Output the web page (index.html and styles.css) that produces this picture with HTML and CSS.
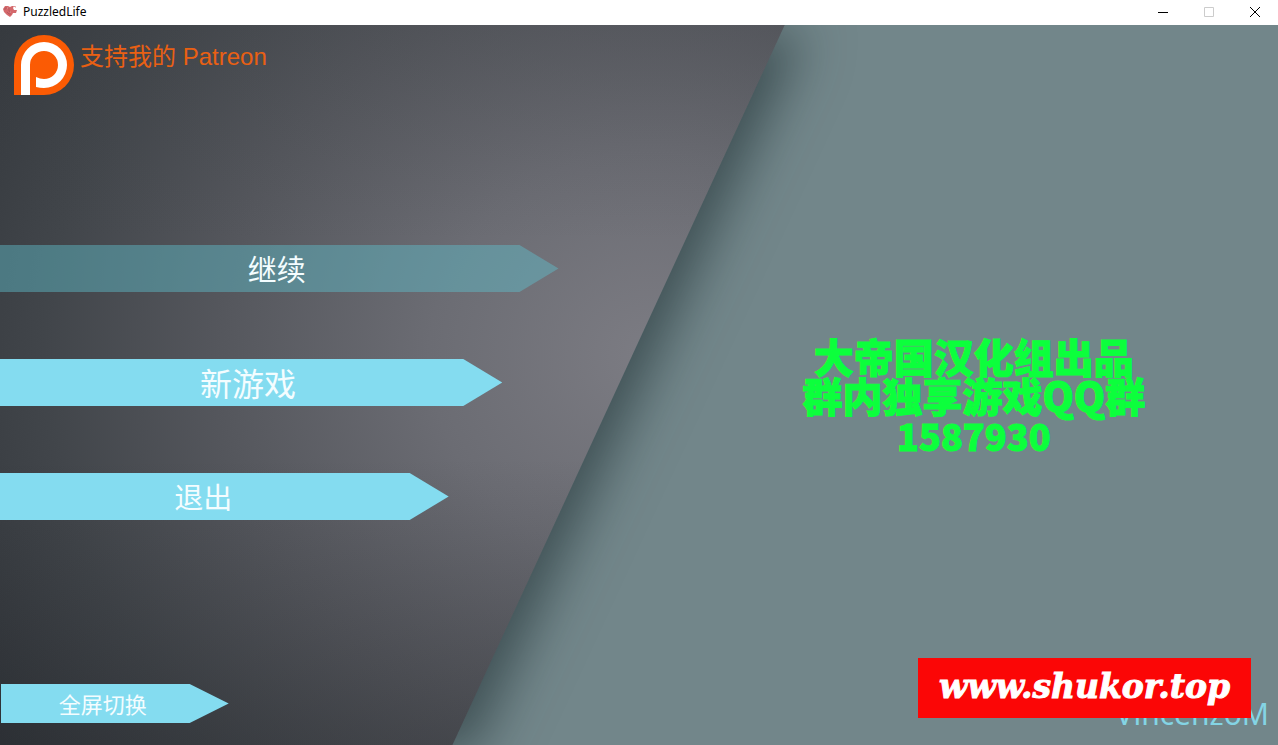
FILE: index.html
```html
<!DOCTYPE html>
<html lang="zh-CN">
<head>
<meta charset="utf-8">
<title>PuzzledLife</title>
<link rel="stylesheet" href="styles.css">
</head>
<body>
<header class="titlebar">
  <svg class="app-icon" viewBox="0 0 16 16" aria-hidden="true">
    <path d="M1 5 3 2h3l2 1 2-1h2l-1 2 1 2h3l-1 3-3 0-1 2-2 2-3-2-3-3z" fill="#d4686b"/>
    <path d="M4 3v2H2m5-1v3l2 1M5 8l2 2 2 0" fill="none" stroke="#b8585e"/>
    <path d="M12 2.500h1.500v1M5 4h1M8 8h1" fill="none" stroke="#e09a9c"/>
  </svg>
  <h1 class="app-name">PuzzledLife</h1>
  <div class="window-controls">
    <button class="window-button" aria-label="最小化"><svg class="window-icon" viewBox="0 0 12 12"><path d="M1 6.500h10"/></svg></button>
    <button class="window-button" aria-label="最大化" disabled><svg class="window-icon" viewBox="0 0 12 12"><path d="M1.500 1.500h9v9h-9z"/></svg></button>
    <button class="window-button" aria-label="关闭"><svg class="window-icon" viewBox="0 0 12 12"><path d="M1 1l10 10M11 1 1 11"/></svg></button>
  </div>
</header>
<main class="scene">
  <div class="backdrop"><div class="backdrop-panel"></div></div>
  <section class="menu">
    <a class="patreon" href="#patreon">
      <svg class="patreon-logo" viewBox="0 0 60 60" aria-hidden="true">
        <path d="M0 60V30A30 30 0 1 1 30 60z" fill="#fb5b04"/>
        <path d="M7 60V30A23 23 0 1 1 30 53Q26 53 22 52V42Q26 44 30 44A14 14 0 1 0 16 30V60z" fill="#fff"/>
      </svg>
      <span class="patreon-text">支持我的 Patreon</span>
    </a>
    <nav class="menu-list">
      <button class="arrow arrow-continue" disabled>继续</button>
      <button class="arrow arrow-new">新游戏</button>
      <button class="arrow arrow-quit">退出</button>
    </nav>
    <button class="arrow arrow-fullscreen">全屏切换</button>
  </section>
  <section class="credits">
    <p class="credits-text">大帝国汉化组出品<br>群内独享游戏QQ群<br><span class="credits-number">1587930</span></p>
  </section>
  <span class="author">VincenzoM</span>
  <a class="site-banner" href="#site">www.shukor.top</a>
</main>
</body>
</html>
```
FILE: styles.css
```css
* { box-sizing: border-box; }

body {
  margin: 0;
  min-height: 100vh;
  display: flex;
  flex-direction: column;
  font-family: "Noto Sans CJK SC", sans-serif;
}

button {
  border: 0;
  font-family: inherit;
}

.titlebar {
  display: flex;
  align-items: flex-start;
  height: 25px;
  padding-left: 2px;
  background: #fff;
}

.app-icon {
  width: 16px;
  height: 16px;
  margin-top: 4px;
}

.app-name {
  margin: 0 auto 0 5px;
  font: 400 12px/24px "Noto Sans", sans-serif;
  color: #000;
}

.window-controls { display: flex; }

.window-button {
  display: grid;
  place-items: center;
  width: 46px;
  height: 24px;
  padding: 0;
  background: none;
  color: #000;
}

.window-button:disabled { color: #ccc; }

.window-icon {
  width: 12px;
  height: 12px;
  fill: none;
  stroke: currentColor;
}

.scene {
  position: relative;
  flex: 1;
  display: grid;
  grid-template-columns: 52.4% 1fr;
  overflow: hidden;
  background: #72868a;
}

.backdrop {
  position: absolute;
  inset: 0;
  filter: drop-shadow(20px 8px 26px rgba(24, 40, 42, 0.56));
}

.backdrop-panel {
  height: 100%;
  clip-path: polygon(0 0, 61.4% 0, 35.4% 100%, 0 100%);
  background:
    linear-gradient(to bottom, transparent 60%, rgba(28, 30, 34, 0.25)),
    linear-gradient(to bottom, rgba(60, 64, 68, 0.2), transparent 30%),
    radial-gradient(ellipse 58% 95% at 51% 46%, #7c7c83 0%, #6b6c73 30%, #55575d 58%, #41454a 82%, #32363b 104%);
}

.menu {
  position: relative;
  display: flex;
  flex-direction: column;
  align-items: flex-start;
  padding: 10px 0 22px;
}

.patreon {
  display: flex;
  gap: 6px;
  margin-left: 14px;
  color: #ea6013;
  text-decoration: none;
}

.patreon-logo {
  width: 60px;
  height: 60px;
}

.patreon-text {
  font: 24px/44px "Liberation Sans", "Noto Sans CJK SC", sans-serif;
}

.menu-list {
  align-self: stretch;
  display: flex;
  flex-direction: column;
  gap: 67px;
  margin: 150px 0 auto;
}

.arrow {
  height: 47px;
  padding: 0;
  background: #84dcf0;
  color: #f4fdff;
  font-size: 29px;
  font-weight: 400;
  line-height: 47px;
  clip-path: polygon(0 0, calc(100% - 39px) 0, 100% 50%, calc(100% - 39px) 100%, 0 100%);
}

.arrow-continue {
  width: 83.400%;
  padding-right: 5px;
  background: rgba(95, 190, 205, 0.45);
}

.arrow-new {
  width: 75%;
  padding-right: 6px;
  font-size: 32px;
}

.arrow-quit {
  width: 67%;
  padding-right: 42px;
}

.arrow-fullscreen {
  width: 34%;
  height: 39px;
  margin-left: 1px;
  padding-right: 24px;
  font-size: 22px;
  line-height: 39px;
}

.credits {
  position: relative;
  display: grid;
  place-items: center;
  padding-top: 22px;
}

.credits-text {
  margin: 0;
  color: #0cff3c;
  font-size: 40px;
  font-weight: 900;
  line-height: 39px;
  text-align: center;
  -webkit-text-stroke: 1px #0cff3c;
}

.credits-number {
  font-size: 36px;
}

.author {
  position: absolute;
  right: 9px;
  bottom: 10px;
  color: #84d4e4;
  font: 30px/42px "Noto Sans", sans-serif;
}

.site-banner {
  position: absolute;
  right: 27px;
  bottom: 27px;
  padding: 0 21px 2px;
  background: #fb0606;
  color: #fff;
  font: italic bold 33px/58px "DejaVu Serif", serif;
  text-decoration: none;
  -webkit-text-stroke: 1px #fff;
}
```
